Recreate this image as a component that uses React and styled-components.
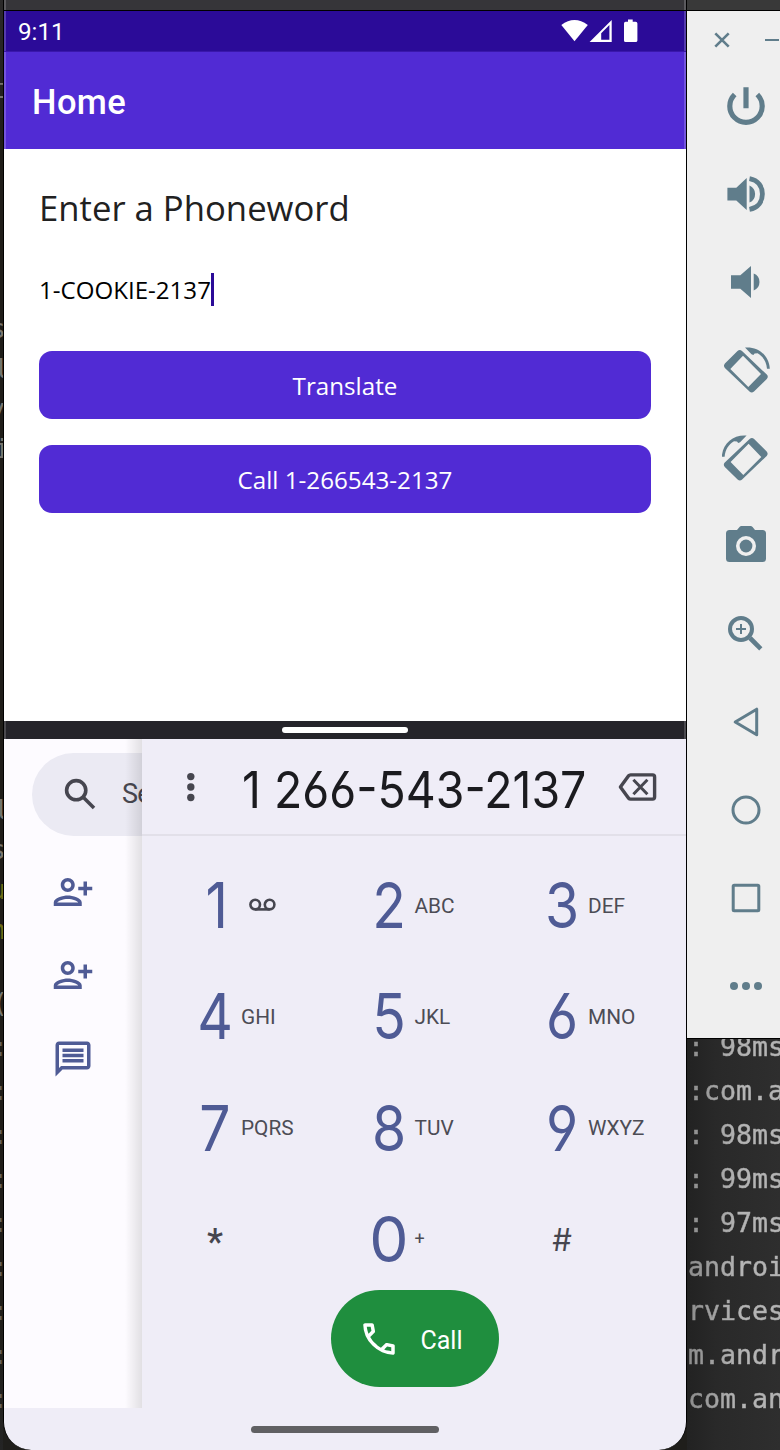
import React from "react";
import styled, { createGlobalStyle } from "styled-components";

const Global = createGlobalStyle`
  * { box-sizing: border-box; }
  body { margin: 0; background: #242322; }
  svg { display: block; flex: none; }
`;

const Desktop = styled.div`
  display: flex;
  width: 780px;
  height: 1450px;
  overflow: hidden;
  background: #1f1e1b;
`;

const Gutter = styled.div`
  width: 3px;
  flex: none;
  overflow: hidden;
  background: linear-gradient(#2b2a2a, #1f1d19 140px, #1f1d19 1300px, #242424);
`;

const Fragment = styled.div`
  display: flex;
  justify-content: flex-end;
  height: 40px;
  margin-top: ${(p) => p.$gap || 0}px;
  margin-left: -20px;
  margin-right: ${(p) => p.$shift || 0}px;
  font: 27px/40px "DejaVu Sans Mono", monospace;
  color: ${(p) => p.$color || "#77756f"};
`;

const Phone = styled.div`
  width: 684px;
  flex: none;
  display: flex;
  flex-direction: column;
  border: solid #000;
  border-width: 0 1px;
  border-radius: 0 0 28px 28px;
  overflow: hidden;
  background: #efedf7;
`;

const Bezel = styled.div`
  height: 11px;
  flex: none;
  background: #363539;
  border-bottom: 1px solid #000;
  box-shadow: inset 2px 0 #5b5a5e, inset -2px 0 #5b5a5e;
`;

const StatusBar = styled.div`
  height: 41px;
  flex: none;
  display: flex;
  align-items: center;
  padding: 0 48px 0 14px;
  background: #2b0b98;
  border-bottom: 1px solid #3a17ab;
  box-shadow: inset 2px 0 #553cad, inset -2px 0 #553cad;
`;

const Clock = styled.span`
  flex: 1;
  padding-top: 1px;
  font: 24.2px/40px Roboto, sans-serif;
  color: #fff;
`;

const TitleBar = styled.div`
  height: 97px;
  flex: none;
  padding: 2px 0 0 28px;
  background: #512bd4;
  box-shadow: inset 2px 0 #7455dd, inset -2px 0 #7455dd;
  font: 500 34.5px/97px Roboto, sans-serif;
  letter-spacing: 0.4px;
  color: #fff;
`;

const Form = styled.div`
  height: 572px;
  flex: none;
  display: flex;
  flex-direction: column;
  padding: 35px 35px 0;
  background: #fff;
  font-family: "Open Sans", sans-serif;
`;

const FormLabel = styled.label`
  font-size: 34.7px;
  line-height: 47px;
  color: #212121;
`;

const Entry = styled.div`
  display: flex;
  align-items: center;
  height: 34px;
  margin-top: 41px;
  font-size: 24.1px;
  color: #000;
`;

const Caret = styled.i`
  width: 3px;
  height: 33px;
  background: #2b0b98;
`;

const Action = styled.button`
  height: 68px;
  margin-top: ${(p) => p.$gap}px;
  border: 0;
  border-radius: 13px;
  background: #512bd4;
  color: #fff;
  font: 24.2px/67px "Open Sans", sans-serif;
  padding: 1px 0 0;
`;

const SplitHandle = styled.div`
  height: 18px;
  flex: none;
  display: flex;
  align-items: center;
  justify-content: center;
  background: #25242a;
  box-shadow: inset 2px 0 #4b4a4f, inset -2px 0 #4b4a4f;
`;

const Pill = styled.div`
  width: ${(p) => p.$w}px;
  height: ${(p) => p.$h}px;
  border-radius: 4px;
  background: ${(p) => p.$color};
`;

const Dialer = styled.div`
  height: 669px;
  flex: none;
  display: flex;
`;

const ContactsPane = styled.div`
  position: relative;
  width: 138px;
  flex: none;
  overflow: hidden;
  padding-top: 14px;
  background: #fdfbff;
  &::after {
    content: "";
    position: absolute;
    inset: 0 0 0 auto;
    width: 17px;
    background: linear-gradient(90deg, rgba(0, 0, 0, 0), rgba(0, 0, 0, 0.045) 40%, rgba(0, 0, 0, 0.11));
  }
`;

const SearchBox = styled.div`
  display: flex;
  align-items: center;
  width: 300px;
  height: 83px;
  margin-left: 28px;
  padding-left: 32px;
  gap: 26px;
  border-radius: 42px;
  background: #ebeaf3;
  font: 27px/85px Roboto, sans-serif;
  letter-spacing: -0.8px;
  color: #48474f;
  svg {
    margin-top: -2px;
  }
`;

const Shortcuts = styled.div`
  display: flex;
  flex-direction: column;
  gap: 41.4px;
  padding: 35px 0 0 48.3px;
`;

const DialPane = styled.div`
  flex: 1;
  min-width: 0;
  display: flex;
  flex-direction: column;
  align-items: stretch;
  background: #efedf7;
`;

const NumberBar = styled.div`
  height: 97px;
  flex: none;
  display: flex;
  align-items: center;
  padding: 0 29px 0 44px;
  border-bottom: 2px solid #e2e0e9;
`;

const NumberText = styled.div`
  flex: 1;
  min-width: 0;
  padding: 6px 0 0 46px;
  white-space: pre;
  font: 51px/90px Inter, sans-serif;
  font-feature-settings: "cv03", "cv04";
  color: #1b1b1f;
  span {
    display: inline-block;
    transform: scaleX(0.91);
    transform-origin: 0 50%;
  }
`;

const Keypad = styled.div`
  display: grid;
  grid-template-columns: repeat(3, 173.5px);
  grid-auto-rows: 111.3px;
  padding: 13.4px 0 0 51px;
`;

const Key = styled.div`
  display: flex;
  align-items: center;
`;

const Digit = styled.span`
  width: 44px;
  margin-right: 4px;
  padding-left: ${(p) => p.$nudge || 0}px;
  text-align: center;
  font: 63.5px/80px Inter, sans-serif;
  font-feature-settings: "cv03", "cv04";
  color: #4f5b95;
  transform: scaleX(${(p) => p.$sx || 0.87});
`;

const Mark = styled.span`
  width: 44px;
  text-align: center;
  font: ${(p) => p.$weight || 400} ${(p) => p.$size}px/80px ${(p) => p.$face || "Inter"}, sans-serif;
  color: #46464f;
  padding-top: ${(p) => p.$drop || 0}px;
`;

const Letters = styled.span`
  padding-top: 1px;
  font: ${(p) => p.$size || 20.8}px/30px Roboto, sans-serif;
  color: #4c4c55;
`;

const CallButton = styled.button`
  display: flex;
  align-items: center;
  gap: 21px;
  width: 168px;
  height: 97px;
  margin: -5px 0 0 188.5px;
  padding: 1px 0 0 27px;
  border: 0;
  border-radius: 49px;
  background: #1f8e3e;
  color: #fff;
  font: 25px/96px Roboto, sans-serif;
`;

const CallLabel = styled.span`
  padding-top: 4px;
`;

const NavBar = styled.div`
  flex: 1;
  display: flex;
  align-items: center;
  justify-content: center;
`;

const Side = styled.div`
  flex: 1;
  min-width: 0;
  display: flex;
  flex-direction: column;
`;

const SideTop = styled.div`
  height: 11px;
  flex: none;
  background: #393939;
  border-bottom: 1px solid #000;
`;

const Toolbar = styled.div`
  height: 1028px;
  flex: none;
  background: #efefef;
  border-bottom: 1px solid #000;
  padding-left: 27px;
  overflow: hidden;
`;

const WindowControls = styled.div`
  display: flex;
  gap: 35px;
  height: 47px;
  padding-top: 21px;
`;

const Tools = styled.div`
  display: flex;
  flex-direction: column;
  gap: 40px;
  padding: 24px 0 0 8px;
`;

const Terminal = styled.div`
  flex: 1;
  overflow: hidden;
  background: linear-gradient(90deg, #222 0, #292929 30px, #2e2e2e 93px);
`;

const Log = styled.pre`
  margin: -14px 0 0 1px;
  font: 26.6px/44px "DejaVu Sans Mono", monospace;
  background: linear-gradient(90deg, #8c8c8c, #b4b4b4 50px);
  background-clip: text;
  -webkit-background-clip: text;
  color: transparent;
  -webkit-text-stroke: 0.5px transparent;
`;

const TOOL = "#607d8b";
const INDIGO = "#4f5b95";
const GREY = "#46464f";

const tool = { fill: "none", stroke: TOOL };
const ToolIcon = ({ children }) => (
  <svg width="48" height="48" viewBox="0 0 48 48">{children}</svg>
);

const RotateShape = () => (
  <g fill={TOOL}>
    <path
      fillRule="evenodd"
      d="M15.5 4.9Q17.7 2.9 20 4.9L44.8 28.6Q46.8 30.7 44.8 33L32 45.5Q29.7 47.6 27.5 45.5L2.9 21.9Q1 19.7 2.9 17.4ZM21 9.7L8.3 23L26.3 41L39 28Z"
    />
    <path d="M23 1.5C36 .4 47 9 47.8 22.7H45C44.4 15.5 41 10.4 35.6 7.2L32.6 7.4L31.4 9L29.5 8.2Z" />
  </g>
);

const toolIcons = [
  <g {...tool} strokeWidth="5.2">
    <path d="M12.7 12.5A16.2 16.2 0 1 0 35.3 12.5M24 5.3V26.3" />
  </g>,
  <g fill={TOOL}>
    <path d="M5.4 17.7H14.3L24.7 8V40L14.3 30.4H5.4ZM27.5 15.4A9.4 9.4 0 0 1 27.5 32.6Z" />
    <path d="M27.5 8.6C36.5 10.2 40.4 17 40.4 24S36.5 37.8 27.5 39.4" fill="none" stroke={TOOL} strokeWidth="4.8" />
  </g>,
  <path fill={TOOL} d="M9 17.3H18.3L29 8V40L18.3 30.7H9ZM31.7 15.6A9 9 0 0 1 31.7 32.4Z" />,
  <RotateShape />,
  <g transform="translate(47.6 0) scale(-1 1)"><RotateShape /></g>,
  <g fill={TOOL}>
    <path
      fillRule="evenodd"
      d="M15 7.9L17.5 5Q18.2 4 19.5 4H28.5Q29.8 4 30.6 5L33 7.9H40.5Q44 7.9 44 11.5V36.5Q44 40 40.5 40H7.5Q4 40 4 36.5V11.5Q4 7.9 7.5 7.9ZM24 14A10 10 0 1 0 24 34A10 10 0 1 0 24 14Z"
    />
    <circle cx="24" cy="24" r="6.4" />
  </g>,
  <g {...tool}>
    <circle cx="19" cy="19" r="11" strokeWidth="4" />
    <path d="M19 14V24M14 19H24" strokeWidth="2" />
    <path d="M28 28L38.8 38.8" strokeWidth="4.6" />
  </g>,
  <path {...tool} strokeWidth="3" strokeLinejoin="round" d="M13.2 24L34.7 11.2V36.8Z" />,
  <circle {...tool} strokeWidth="3" cx="24" cy="24" r="13" />,
  <rect {...tool} strokeWidth="3" x="11.2" y="11.2" width="25.6" height="25.6" rx="1" />,
  <g fill={TOOL}>
    <circle cx="12" cy="24" r="4" />
    <circle cx="24" cy="24" r="4" />
    <circle cx="36" cy="24" r="4" />
  </g>,
];

const StatusIcons = () => (
  <svg width="77" height="24" viewBox="0 0 77 24" fill="#fff">
    <path d="M0.3 6Q13.5 -4.2 26.8 6L13.5 22.2Z" />
    <path
      fillRule="evenodd"
      d="M28.6 23L50.7 1V23ZM40.2 14.2V20.8H48.4V5.9Z"
    />
    <path d="M67 .6H71.7V2.8H74.6Q76.4 2.8 76.4 4.4V21.4Q76.4 23.1 74.6 23.1H64.6Q63 23.1 63 21.4V4.4Q63 2.8 64.6 2.8H67Z" />
  </svg>
);

const Icon = ({ color, d, size = 42 }) => (
  <svg width={size} height={size} viewBox="0 0 24 24" fill={color}>
    <path d={d} />
  </svg>
);

const personAdd =
  "M13 8c0-2.21-1.79-4-4-4S5 5.79 5 8s1.79 4 4 4 4-1.79 4-4zm-2 0c0 1.1-.9 2-2 2s-2-.9-2-2 .9-2 2-2 2 .9 2 2zM1 18v2h16v-2c0-2.66-5.33-4-8-4s-8 1.34-8 4zm2 0c.2-.71 3.3-2 6-2 2.69 0 5.78 1.28 6 2H3zM20 14v-3h3v-2h-3V6h-2v3h-3v2h3v3h2z";
const message =
  "M4 4h16v12H5.17L4 17.17V4m0-2c-1.1 0-1.99.9-1.99 2L2 22l4-4h14c1.1 0 2-.9 2-2V4c0-1.1-.9-2-2-2H4zm2 10h12v2H6v-2zm0-3h12v2H6V9zm0-3h12v2H6V6z";
const handset =
  "M19.95 21q-3.125 0-6.175-1.363t-5.55-3.862q-2.5-2.5-3.862-5.55T3 4.05q0-.45.3-.75t.75-.3H8.1q.35 0 .625.238t.325.562l.65 3.5q.05.4-.025.675T9.4 8.45L6.975 10.9q.5.925 1.187 1.787t1.513 1.663q.775.775 1.625 1.438t1.8 1.212l2.35-2.35q.225-.225.588-.338t.712-.062l3.45.7q.35.1.575.363T21 15.9v4.05q0 .45-.3.75t-.75.3zM6.025 9l1.65-1.65L7.25 5H5.025q.125 1.025.35 2.025T6.025 9zm8.95 8.95q.975.425 1.988.675T19 18.95v-2.2l-2.35-.475z";

const Voicemail = () => (
  <svg width="28" height="14" viewBox="0 0 28 14" fill="none" stroke={GREY} strokeWidth="2.6">
    <circle cx="6.2" cy="6.6" r="4.8" />
    <circle cx="20.6" cy="6.6" r="4.8" />
    <path d="M6.2 11.4H20.6" />
  </svg>
);

const keys = [
  ["2", "ABC"], ["3", "DEF"], ["4", "GHI"], ["5", "JKL"],
  ["6", "MNO"], ["7", "PQRS"], ["8", "TUV"], ["9", "WXYZ"],
];

const logLines = [": 98ms", ":com.android", ": 98ms", ": 99ms", ": 97ms", "android", "rvices", "m.android", "com.android"];

export default function App() {
  return (
    <>
      <Global />
      <Desktop>
        <Gutter>
          <Fragment $gap={69} $shift={-3}>t</Fragment>
          <Fragment $gap={200} $shift={-3}>s</Fragment>
          <Fragment $shift={-7}>l</Fragment>
          <Fragment $shift={-2}>y</Fragment>
          <Fragment $shift={-7}>i</Fragment>
          <Fragment $gap={321} $shift={-7}>l</Fragment>
          <Fragment $shift={-3}>s</Fragment>
          <Fragment $color="#6d6a16" $shift={-3}>u</Fragment>
          <Fragment $color="#6d6a16" $shift={-3}>n</Fragment>
          <Fragment $gap={33} $shift={-5}>(</Fragment>
          {Array.from({ length: 9 }, (_, i) => (
            <Fragment key={i} $gap={4} $shift={-5} $color="#66645f">:</Fragment>
          ))}
        </Gutter>
        <Phone>
          <Bezel />
          <StatusBar>
            <Clock>9:11</Clock>
            <StatusIcons />
          </StatusBar>
          <TitleBar>Home</TitleBar>
          <Form>
            <FormLabel>Enter a Phoneword</FormLabel>
            <Entry>1-COOKIE-2137<Caret /></Entry>
            <Action $gap={45}>Translate</Action>
            <Action $gap={26}>Call 1-266543-2137</Action>
          </Form>
          <SplitHandle><Pill $w={126} $h={6} $color="#fff" /></SplitHandle>
          <Dialer>
            <ContactsPane>
              <SearchBox>
                <svg width="32" height="32" viewBox="0 0 32 32" fill="none" stroke={GREY} strokeWidth="3.6">
                  <circle cx="12.2" cy="12.2" r="9.6" />
                  <path d="M19 19L30 30" />
                </svg>
                Search
              </SearchBox>
              <Shortcuts>
                <Icon color={INDIGO} d={personAdd} />
                <Icon color={INDIGO} d={personAdd} />
                <Icon color={INDIGO} d={message} />
              </Shortcuts>
            </ContactsPane>
            <DialPane>
              <NumberBar>
                <svg width="10" height="30" viewBox="0 0 10 30" fill={GREY}>
                  <circle cx="4.8" cy="4.6" r="3.7" />
                  <circle cx="4.8" cy="15" r="3.7" />
                  <circle cx="4.8" cy="25.5" r="3.7" />
                </svg>
                <NumberText><span>1 266-543-2137</span></NumberText>
                <svg width="39" height="28" viewBox="0 0 39 28" fill="none" stroke={GREY}>
                  <path strokeWidth="3.4" strokeLinejoin="round" d="M2.4 14L10.4 3Q11.4 1.9 12.6 1.9H34.6Q36.6 1.9 36.6 3.9V24.1Q36.6 26.1 34.6 26.1H12.6Q11.4 26.1 10.4 25Z" />
                  <path strokeWidth="3" d="M15.4 6.8L29.4 21.2M29.4 6.8L15.4 21.2" />
                </svg>
              </NumberBar>
              <Keypad>
                <Key><Digit $nudge={4}>1</Digit><svg width="8" height="1" /><Voicemail /></Key>
                {keys.map(([d, l]) => (
                  <Key key={d}><Digit>{d}</Digit><Letters>{l}</Letters></Key>
                ))}
                <Key><Mark $size={36} $weight={500} $face="Roboto" $drop={6}>*</Mark></Key>
                <Key><Digit $sx={0.98}>0</Digit><Letters $size={18}>+</Letters></Key>
                <Key><Mark $size={31} $drop={2}>#</Mark></Key>
              </Keypad>
              <CallButton><Icon color="#fff" d={handset} /><CallLabel>Call</CallLabel></CallButton>
            </DialPane>
          </Dialer>
          <NavBar><Pill $w={188} $h={7} $color="#606063" /></NavBar>
        </Phone>
        <Side>
          <SideTop />
          <Toolbar>
            <WindowControls>
              <svg width="16" height="16" viewBox="0 0 16 16" stroke={TOOL} strokeWidth="2.6">
                <path d="M1.3 1.3L14.7 14.7M14.7 1.3L1.3 14.7" />
              </svg>
              <svg width="14" height="16" viewBox="0 0 14 16" stroke={TOOL} strokeWidth="2">
                <path d="M0 8H14" />
              </svg>
            </WindowControls>
            <Tools>
              {toolIcons.map((shape, i) => <ToolIcon key={i}>{shape}</ToolIcon>)}
            </Tools>
          </Toolbar>
          <Terminal><Log>{logLines.join("\n")}</Log></Terminal>
        </Side>
      </Desktop>
    </>
  );
}
